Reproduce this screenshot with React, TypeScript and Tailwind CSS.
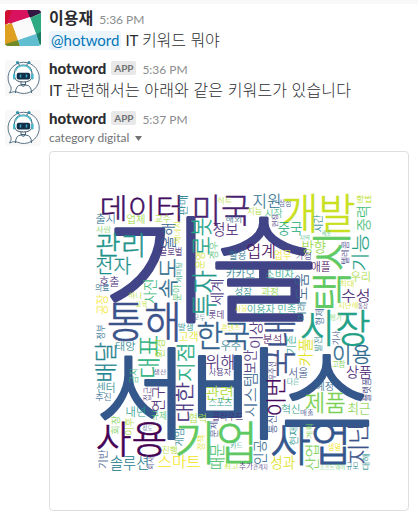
import type { ReactNode } from "react";

type Word = [text: string, x0: number, y0: number, x1: number, y1: number, color: string, vertical?: 1];

const WORDS: Word[] = [
  ["기술", 111.5, 216.5, 310.5, 322.5, "#414487"],
  ["서비스", 101.5, 348, 368.5, 439, "#35588c"],
  ["데이터", 102.3, 195, 180, 221, "#440f62"],
  ["출시", 96, 214, 114.3, 224, "#2c718e"],
  ["업체", 127.3, 215, 144.3, 224.3, "#9bd93c"],
  ["교수", 155.3, 215, 170.3, 222.7, "#a5db36"],
  ["사람", 96.3, 225.7, 110.7, 232.3, "#7ad151"],
  ["관리", 96.7, 233.3, 142.3, 257.3, "#1f948c"],
  ["전자", 96.7, 257.3, 130.7, 275, "#21908d"],
  ["호출", 99.5, 276, 118.7, 286.7, "#472d7b"],
  ["판매", 179, 196, 188, 215, "#26828e", 1],
  ["올해", 162, 224, 175.7, 248.5, "#33628d", 1],
  ["에너지", 175, 222, 180.7, 243.5, "#d8e219", 1],
  ["글로벌", 160, 248, 181.7, 256, "#482878"],
  ["속도", 159, 259, 177.5, 297.5, "#2f6b8e", 1],
  ["캐피탈", 176, 262, 181, 282, "#1f9e89", 1],
  ["사진", 143.3, 280, 155.7, 303, "#35b779", 1],
  ["미국", 195, 194, 249, 225.5, "#481f70"],
  ["히트", 217.7, 196.7, 232, 203.3, "#b5de2b"],
  ["지원", 253.3, 194, 279.5, 208.5, "#2d708e"],
  ["지능", 247.7, 207.3, 261.7, 214.3, "#addc30"],
  ["해외", 226, 215, 241, 222.3, "#31688e"],
  ["시작", 265, 208.5, 282.3, 217.5, "#35b779"],
  ["정보", 213.3, 222.7, 237.7, 236, "#482173"],
  ["로봇", 192.3, 218.5, 211, 254.5, "#20a486", 1],
  ["운영", 195, 252.5, 204.5, 268.5, "#d0e11c", 1],
  ["경우", 209, 242, 217.5, 258.5, "#4ac16d", 1],
  ["업계", 247.3, 244, 274.3, 258.5, "#46085c"],
  ["활용", 229.5, 250.5, 246, 260, "#2c728e"],
  ["업무", 274.7, 250.5, 291, 259.5, "#f0e51d"],
  ["카카오", 226.5, 268, 254.5, 278.5, "#2a788e"],
  ["소비자", 265.5, 269, 293.7, 278.5, "#22a884"],
  ["삼성", 279, 200, 290.7, 207, "#3b528b"],
  ["현장", 271.5, 214, 277, 227, "#472d7b", 1],
  ["투자", 192.3, 271, 216, 315.5, "#1f998a", 1],
  ["세계", 211, 280, 223.5, 305, "#46327e", 1],
  ["개발", 284, 194, 354.3, 232.5, "#c8e020"],
  ["항법", 356.7, 195, 371, 202.7, "#bddf26"],
  ["중력", 356.7, 206.7, 370, 230.7, "#3fbc73", 1],
  ["시간", 313.3, 215, 322.3, 231.7, "#25848e", 1],
  ["중국", 278.3, 222.3, 301.7, 235, "#28ae80"],
  ["지역", 300, 235, 309.3, 239.3, "#35b779"],
  ["세포", 321.7, 231, 331, 235.7, "#35b779"],
  ["방향", 302.7, 240, 325.7, 252.7, "#90d743"],
  ["가정", 296, 252.3, 310.7, 260, "#424086"],
  ["애플", 311.7, 262.3, 330, 272.3, "#440154"],
  ["텔레콤", 340.7, 241.7, 348.3, 264, "#424086", 1],
  ["기능", 351.7, 234.5, 368.5, 270, "#1fa187", 1],
  ["택시", 312.5, 237, 350, 308, "#5ec962", 1],
  ["우리", 351, 271.5, 369.5, 281.7, "#a5db36"],
  ["도움", 295, 274, 307.5, 299.5, "#33628d", 1],
  ["최대", 340, 280, 353.5, 286.7, "#d2e21b"],
  ["의료", 95.5, 284, 109, 292, "#2d708e"],
  ["공장", 96.7, 295, 107.7, 314.3, "#f4e61e", 1],
  ["하나", 128.5, 292.7, 142.3, 298.5, "#addc30"],
  ["교육", 135.7, 301.5, 147.3, 307.5, "#bddf26"],
  ["통해", 108.7, 301.5, 177.5, 341, "#3b528b"],
  ["분야", 172.7, 285, 180.7, 300.7, "#4ac16d", 1],
  ["정부", 96.7, 325, 105, 339, "#2d708e", 1],
  ["태양", 116, 341, 135, 350.7, "#26828e"],
  ["대표", 138.7, 336, 159, 376.7, "#2db27d", 1],
  ["환경", 155.7, 340, 165, 357.5, "#a0da39", 1],
  ["배달", 95.7, 342.5, 116, 380.5, "#25848e", 1],
  ["지점", 176.5, 345, 194.5, 381, "#25ab82", 1],
  ["생산", 154, 369, 166, 374.5, "#46327e"],
  ["금지", 130, 369, 138, 383, "#35b779", 1],
  ["한국", 197.7, 321.5, 248.7, 349.5, "#33608d"],
  ["위해", 206, 354, 233.5, 369, "#482878"],
  ["사용자", 209, 368.5, 231, 375.7, "#46327e"],
  ["성장", 235, 287.3, 251.7, 296, "#25848e"],
  ["과정", 261.7, 287.3, 277.7, 296, "#90d743"],
  ["이용자 민족", 247.7, 304.5, 295.7, 314, "#1f9e89"],
  ["사물", 235, 305.5, 247, 311.5, "#e5e419"],
  ["롯데", 209, 310.7, 223.3, 319, "#472d7b"],
  ["모두", 193.3, 315.5, 205, 321, "#31688e"],
  ["발생", 178.5, 323.3, 192.7, 330.7, "#21918c"],
  ["고객", 179, 331.5, 197.5, 341.7, "#dfe318"],
  ["콘텐츠", 221.7, 324.3, 240, 330.7, "#dde318"],
  ["우주", 221, 341, 240.7, 351, "#2a788e"],
  ["이상", 250, 321.7, 262.3, 347.7, "#482475", 1],
  ["분석", 263.3, 335, 281, 344, "#440154"],
  ["보안", 244.3, 350, 256, 373.3, "#472d7b", 1],
  ["시스템", 243.5, 374, 256.7, 416.5, "#33628d", 1],
  ["우주선", 269, 361.7, 276, 380, "#414487", 1],
  ["이번", 267.5, 379.5, 286, 414.5, "#46085c", 1],
  ["국내", 265, 323, 294.5, 376, "#3b528b", 1],
  ["기존", 286.7, 335.7, 296, 353.5, "#21a585", 1],
  ["카풀", 299, 338.5, 312.7, 365.7, "#dfe318", 1],
  ["시장", 301.7, 310, 369.5, 346.7, "#1fa187"],
  ["미래", 297.5, 302.5, 306, 320, "#297a8e", 1],
  ["형제", 315, 309, 323.3, 325, "#35608d", 1],
  ["평가", 330, 315, 341.7, 320.7, "#7ad151"],
  ["발전", 314.3, 337.3, 321.7, 351, "#25848e", 1],
  ["기사", 332.3, 331, 339.5, 344.5, "#3b528b", 1],
  ["이용", 334, 345, 370, 364, "#2f6c8e"],
  ["고참", 332.3, 360, 345, 367.3, "#7ad151"],
  ["상품", 346.7, 365.7, 371, 378.5, "#482475"],
  ["수성", 341.7, 289, 368.5, 302.5, "#481f70"],
  ["지난해", 338.3, 302.5, 357.7, 309, "#d5e21a"],
  ["통상", 358.3, 303.5, 367.7, 308.5, "#472d7b"],
  ["서울", 289, 367.7, 307.5, 377.7, "#3b528b"],
  ["센터", 96.7, 382.3, 114.3, 392.7, "#25848e"],
  ["추진", 95.7, 393.3, 110.7, 400.7, "#31688e"],
  ["접근", 143.3, 387.3, 150, 400.7, "#482878", 1],
  ["연구", 151.7, 386.7, 164, 411, "#481f70", 1],
  ["내년", 126.7, 406.7, 145, 417.3, "#1f9e89"],
  ["규제", 151.7, 411.7, 166, 420, "#4ac16d"],
  ["이후", 124.3, 418, 133.3, 435, "#addc30", 1],
  ["회장", 110.7, 415.7, 119.3, 434, "#7ad151", 1],
  ["사용", 97.3, 421.5, 165, 456, "#440154"],
  ["정도", 142.7, 425, 152.3, 430, "#31688e"],
  ["대한", 176, 382.5, 194, 420.5, "#46327e", 1],
  ["게임", 174.3, 429.3, 184, 446, "#26828e", 1],
  ["진행", 162.3, 446, 176.7, 453.3, "#addc30"],
  ["기반", 99, 450, 108.3, 468.3, "#39568c", 1],
  ["솔루션", 110.7, 456, 147.7, 470, "#287c8e"],
  ["회사", 147.7, 456.7, 154, 469.3, "#424086", 1],
  ["스마트", 158.3, 455, 200, 468, "#f4e61e"],
  ["기업", 177.5, 421, 252.3, 463.5, "#5ec962"],
  ["관련", 205.7, 386, 232.3, 400, "#addc30"],
  ["스포츠", 209, 398.5, 231.7, 406, "#1f9e89"],
  ["협력", 189.3, 413.3, 205.7, 422.7, "#a5db36"],
  ["클라우드", 212.7, 412.7, 242.7, 420.7, "#472d7b"],
  ["문제", 210, 421.7, 217.7, 437.3, "#414487", 1],
  ["정책", 197.3, 435.7, 205, 450, "#e5e419", 1],
  ["때문", 210, 444.3, 224, 469, "#4ac16d", 1],
  ["카드", 230.7, 442.7, 242.3, 449, "#1f9e89"],
  ["최고", 224.3, 462.7, 238.3, 469.3, "#bddf26"],
  ["추가", 239.3, 462.3, 252.7, 469.3, "#472d7b"],
  ["관계자", 253.3, 464.3, 267.7, 469.3, "#46327e"],
  ["인공", 253.3, 440.7, 266, 464, "#31688e", 1],
  ["통신", 267.3, 415.7, 276.7, 433.3, "#3b528b", 1],
  ["성과", 271, 455.7, 295, 469, "#dfe318"],
  ["다른", 287.3, 377.7, 299, 384.3, "#1f9e89"],
  ["예정", 316, 381.7, 332.7, 391, "#31688e"],
  ["제품", 305.7, 392.7, 344.3, 413.3, "#7ad151"],
  ["최근", 348.3, 402.7, 370, 414.3, "#86d549"],
  ["혁신", 281.7, 405, 299.3, 414.3, "#1f9e89"],
  ["매출", 300.7, 409, 313.3, 415.7, "#3b528b"],
  ["플랫폼", 361.7, 378.5, 370.5, 401, "#414487", 1],
  ["사업", 271.7, 422, 346, 465, "#33568c"],
  ["현재", 289, 427.7, 297.7, 445, "#21918c", 1],
  ["계획", 305.7, 424, 312.3, 438.3, "#7ad151", 1],
  ["산업", 306, 445.7, 318.3, 470, "#7ad151", 1],
  ["소프트웨어", 320, 464, 344.3, 469.3, "#5ec962"],
  ["규모", 346.7, 462.3, 358.3, 469.3, "#25848e"],
  ["대해", 362.3, 454, 370, 469.3, "#21918c", 1],
  ["지난", 348.3, 423.3, 367.7, 463.3, "#3b528b", 1],
  ["생명", 328.3, 443.3, 340, 451, "#f4e61e"],
];

const CLOUD_FONT = '300 100px "Noto Sans CJK KR", sans-serif';

// Scales each word so that its ink fills its box; vertical words read upwards.
function placeWords() {
  const ctx = document.createElement("canvas").getContext("2d")!;
  ctx.font = CLOUD_FONT;
  return WORDS.map(([text, x0, y0, x1, y1, color, vertical]) => {
    const m = ctx.measureText(text);
    const left = m.actualBoundingBoxLeft;
    const up = m.actualBoundingBoxAscent;
    const w = left + m.actualBoundingBoxRight;
    const h = up + m.actualBoundingBoxDescent;
    const bw = x1 - x0;
    const bh = y1 - y0;
    const transform = vertical
      ? `matrix(0 ${-bh / w} ${bw / h} 0 ${x0 + (up * bw) / h} ${y1 - (left * bh) / w})`
      : `matrix(${bw / w} 0 0 ${bh / h} ${x0 + (left * bw) / w} ${y0 + (up * bh) / h})`;
    const size = Math.min(bw, bh);
    const stroke = size > 60 ? 2.8 : size > 17 ? 1.6 : 1;
    return { text, color, transform, stroke, key: `${text}-${x0}` };
  });
}

function WordCloud() {
  return (
    <svg className="block h-[358px] w-[358px]" viewBox="50 152 358 358">
      {placeWords().map((p) => (
        <text
          key={p.key}
          transform={p.transform}
          fill={p.color}
          stroke={p.color}
          strokeWidth={p.stroke}
          strokeLinejoin="round"
          className="font-['Noto_Sans_CJK_KR',sans-serif] text-[100px] font-light"
        >
          {p.text}
        </text>
      ))}
    </svg>
  );
}

function UserAvatar() {
  return (
    <svg className="h-9 w-9 shrink-0 rounded-[3px]" viewBox="0 0 36 36">
      <rect width="36" height="36" fill="#fff" />
      <path d="M0 0H8L4 13L0 15Z" fill="#cf1030" />
      <path d="M7 0H22L26 7L5 14L3 11Z" fill="#d9125f" />
      <path d="M22 0H36V3L25 8Z" fill="#341642" />
      <path d="M25 8L36 3V23L31 24Z" fill="#2fa982" />
      <path d="M31 24L36 22V36H35Z" fill="#187c62" />
      <path d="M0 15L7 13L13 30L0 35Z" fill="#dfa022" />
      <path d="M0 34L13 30L15 36H0Z" fill="#728a26" />
      <path d="M13 30L31 23L35 36H15Z" fill="#61bdd0" />
      <path d="M7 13L25 7L31 24L13 30Z" fill="#fafafa" />
    </svg>
  );
}

function BotAvatar() {
  return (
    <svg className="h-9 w-9 shrink-0 rounded-[3px]" viewBox="0 0 36 36" fill="none">
      <rect width="36" height="36" fill="#f8f8f8" />
      <path d="M6 27A15.6 15.6 0 1 1 12 32Q8 31 4.500 33Q7 30 6 27Z" fill="#fff" stroke="#36566c" strokeWidth=".8" />
      <path d="M14.500 5L12.500 2.500M21.500 5L24 2.500" stroke="#263f58" strokeWidth=".9" />
      <circle cx="12.500" cy="2.500" r="1.500" fill="#2e8ea6" />
      <circle cx="24" cy="2.500" r="1.500" fill="#2e8ea6" />
      <path d="M9.500 17V13Q10 5 18.300 5Q26.500 5 27 13V17Q26 22 18.300 22Q10.500 22 9.500 17Z" fill="#fff" stroke="#263f58" strokeWidth=".9" />
      <path d="M10.500 11Q12 5.800 18.300 5.800Q24.500 5.800 26 11" stroke="#57c3d2" strokeWidth="1.400" />
      <rect x="8" y="13.500" width="2.300" height="6" rx="1.100" fill="#45b7c9" />
      <rect x="26.300" y="13.500" width="2.300" height="6" rx="1.100" fill="#45b7c9" />
      <rect x="11.700" y="12.700" width="13.500" height="6.800" rx="2" fill="#12304c" />
      <path d="M15.500 14.500V17.500M21.500 14.500V17.500" stroke="#3caac0" strokeWidth="1.500" />
      <path d="M16 22V24.500H20.500V22M10.500 33Q10.500 25.500 16 25H21Q26.500 25.500 26.500 33" stroke="#36566c" strokeWidth=".9" />
      <path d="M16 24.500L18.300 27L20.500 24.500" stroke="#36566c" strokeWidth=".7" />
    </svg>
  );
}

type MessageProps = { avatar: ReactNode; name: ReactNode; time: string; app?: boolean; children: ReactNode };

function Message({ avatar, name, time, app, children }: MessageProps) {
  return (
    <article className="flex gap-2 pl-[5px]">
      {avatar}
      <div className="min-w-0 flex-1">
        <header className="flex h-[18px] items-center pb-[2px] whitespace-nowrap">
          <span className="text-[15px] leading-[18px] font-black">{name}</span>
          {app && (
            <span className="ml-[5px] flex h-[14px] w-[25px] items-center justify-center rounded-[2px] bg-[#e8e8e8] text-[10px] leading-[14px] font-bold text-[#717274]">
              APP
            </span>
          )}
          <span className="ml-[6px] pt-[3px] text-[12px] leading-[18px] text-[#8b8c8e]">{time}</span>
        </header>
        {children}
      </div>
    </article>
  );
}

export default function App() {
  return (
    <main className="h-[518px] w-[418px] overflow-hidden bg-white font-['Lato','Noto_Sans_CJK_KR',sans-serif] text-[#2c2d30]">
      <div className="h-1 bg-[#f8f8f8]" />
      <section className="flex flex-col pt-[6px]">
        <div className="h-[50px]">
          <Message avatar={<UserAvatar />} name={<span className="text-[16px] font-bold">이용재</span>} time="5:36 PM">
            <p className="mt-[2px] h-5 text-[15px] leading-5 whitespace-nowrap">
              <span className="mr-1 inline-block h-[19px] rounded-[3px] bg-[#ebf5fb] px-[2px] leading-[19px] text-[#0576b9]">@hotword</span>
              IT <span className="text-[16px] font-light">키워드 뭐야</span>
            </p>
          </Message>
        </div>
        <div className="h-[50px]">
          <Message avatar={<BotAvatar />} name="hotword" time="5:36 PM" app>
            <p className="mt-[2px] h-5 text-[15px] leading-5 whitespace-nowrap">
              IT <span className="text-[16px] font-light tracking-[0.15px]">관련해서는 아래와 같은 키워드가 있습니다</span>
            </p>
          </Message>
        </div>
        <Message avatar={<BotAvatar />} name="hotword" time="5:37 PM" app>
          <div className="flex h-[23px] items-center gap-[6px] pb-[3px] text-[12px] text-[#717274]">
            <span>category digital</span>
            <svg className="h-[5px] w-[7px]" viewBox="0 0 7 5" fill="#717274">
              <path d="M0 0H7L3.500 5Z" />
            </svg>
          </div>
          <div className="h-[360px] w-[360px] rounded-[4px] border border-[#dedede]">
            <WordCloud />
          </div>
        </Message>
      </section>
    </main>
  );
}
